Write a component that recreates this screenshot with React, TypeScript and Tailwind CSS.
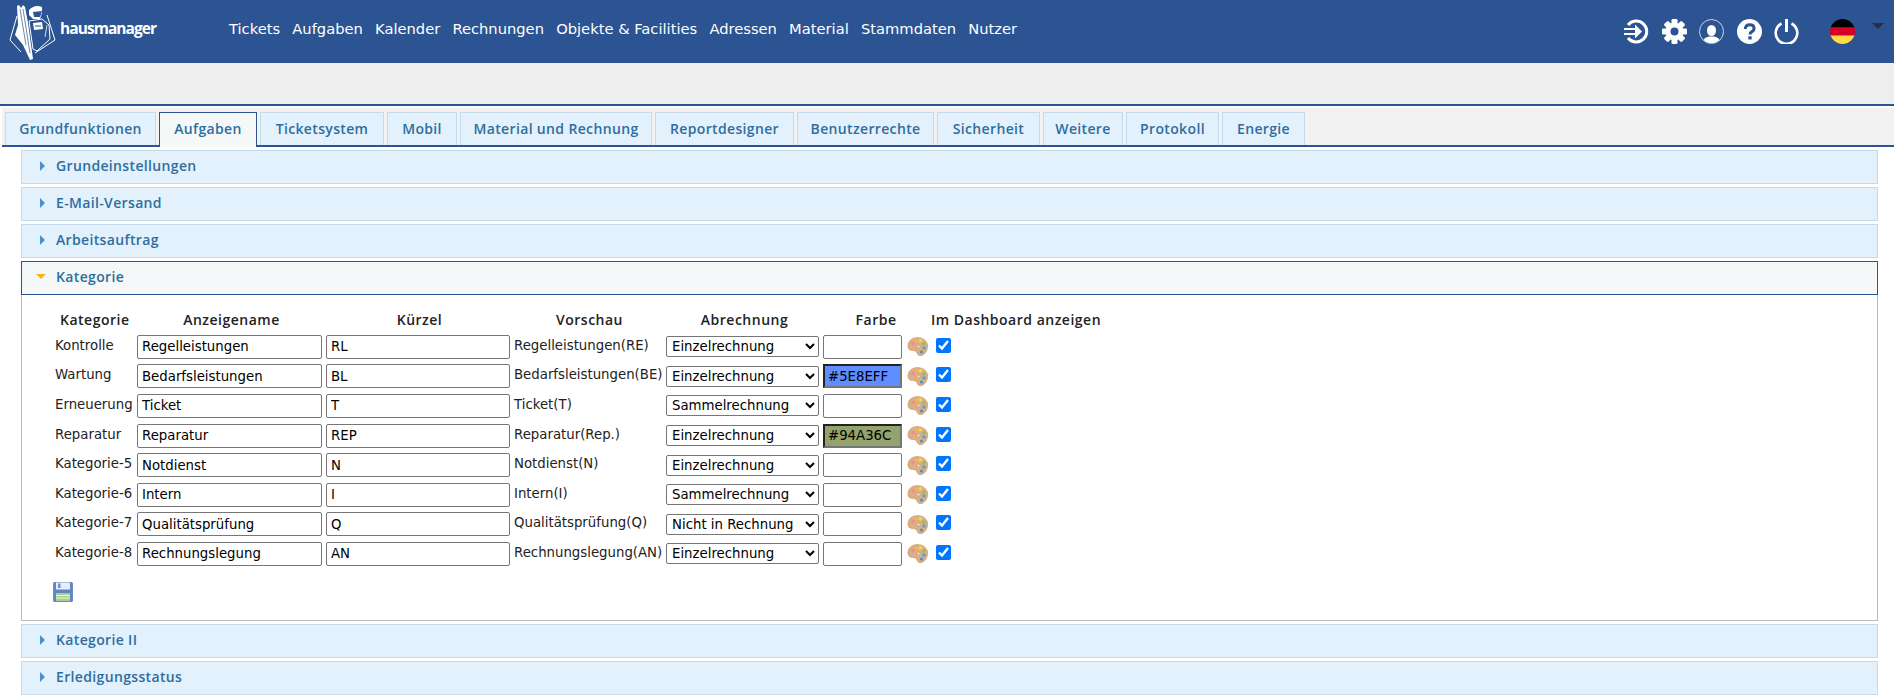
import React from "react";

const nav = ["Tickets", "Aufgaben", "Kalender", "Rechnungen", "Objekte & Facilities", "Adressen", "Material", "Stammdaten", "Nutzer"];
const tabs = [
  { t: "Grundfunktionen", w: "w-[151px]" },
  { t: "Aufgaben", w: "w-[98px]" },
  { t: "Ticketsystem", w: "w-[124px]" },
  { t: "Mobil", w: "w-[70px]" },
  { t: "Material und Rechnung", w: "w-[192px]" },
  { t: "Reportdesigner", w: "w-[139px]" },
  { t: "Benutzerrechte", w: "w-[137px]" },
  { t: "Sicherheit", w: "w-[103px]" },
  { t: "Weitere", w: "w-[80px]" },
  { t: "Protokoll", w: "w-[93px]" },
  { t: "Energie", w: "w-[83px]" },
];
const rows = [
  ["Kontrolle", "Regelleistungen", "RL", "Regelleistungen(RE)", "Einzelrechnung", ""],
  ["Wartung", "Bedarfsleistungen", "BL", "Bedarfsleistungen(BE)", "Einzelrechnung", "#5E8EFF"],
  ["Erneuerung", "Ticket", "T", "Ticket(T)", "Sammelrechnung", ""],
  ["Reparatur", "Reparatur", "REP", "Reparatur(Rep.)", "Einzelrechnung", "#94A36C"],
  ["Kategorie-5", "Notdienst", "N", "Notdienst(N)", "Einzelrechnung", ""],
  ["Kategorie-6", "Intern", "I", "Intern(I)", "Sammelrechnung", ""],
  ["Kategorie-7", "Qualitätsprüfung", "Q", "Qualitätsprüfung(Q)", "Nicht in Rechnung", ""],
  ["Kategorie-8", "Rechnungslegung", "AN", "Rechnungslegung(AN)", "Einzelrechnung", ""],
];

function Logo() {
  return (
    <svg width="48" height="62" viewBox="0 0 48 62" className="shrink-0" fill="none">
      <path d="M38 14 L46 39 L26 52 M12 51 L1 39 L8 15" stroke="#fff" strokeWidth="1" />
      <path d="M8 5 L10 4 L12 7 L14 4 L16 6 L19 22 L24 58 L21 59 L14 44 L6 34 L9 24 Z" fill="#fff" />
      <path d="M11 8 L17 44 M14 8 L21 52" stroke="#2c5392" strokeWidth="0.7" />
      <path d="M20 9 Q26 3 33 6 L33 12 L31 18 L24 18 L20 14 Z" fill="#fff" />
      <path d="M24 11 L33 10 L31 16 L25 16 Z" fill="#2c5392" />
      <path d="M20 20 L33 18 L40 24 L41 38 L28 50 L24 48 Z" fill="#2c5392" stroke="#fff" strokeWidth="1" />
      <path d="M24 22 L33 21 L34 28 L25 29 Z" fill="#fff" />
      <path d="M26 25 H32" stroke="#2c5392" strokeWidth="1" />
      <path d="M38 24 L36 36" stroke="#fff" strokeWidth="0.8" />
    </svg>
  );
}

function SignIn() {
  return (
    <svg width="25" height="25" viewBox="0 0 25 25" fill="none" stroke="#fff" strokeWidth="3">
      <path d="M4 6 A10.5 10.5 0 1 1 4 19" />
      <path d="M0 10 H11 M0 15 H11" strokeWidth="2.2" />
      <path d="M11 5.5 L18 12.5 L11 19.5 Z" fill="#fff" stroke="none" />
    </svg>
  );
}
function Gear() {
  const teeth = [0, 45, 90, 135];
  return (
    <svg width="25" height="25" viewBox="0 0 25 25">
      {teeth.map((a) => (
        <rect key={a} x="9.5" y="0" width="6" height="25" rx="1.3" fill="#fff" transform={`rotate(${a} 12.5 12.5)`} />
      ))}
      <circle cx="12.5" cy="12.5" r="9" fill="#fff" />
      <circle cx="12.5" cy="12.5" r="4" fill="#2c5392" />
    </svg>
  );
}
function User() {
  return (
    <svg width="25" height="25" viewBox="0 0 25 25">
      <defs>
        <clipPath id="userClip"><circle cx="12.5" cy="12.5" r="11.5" /></clipPath>
      </defs>
      <circle cx="12.5" cy="12.5" r="12" fill="none" stroke="#c9d4e4" strokeWidth="1" />
      <g clipPath="url(#userClip)" fill="#fff">
        <ellipse cx="12.5" cy="11.5" rx="4.5" ry="5.5" />
        <path d="M3 25 Q4 18.5 10 17.5 L15 17.5 Q21 18.5 22 25 Z" />
      </g>
    </svg>
  );
}
function Help() {
  return (
    <svg width="25" height="25" viewBox="0 0 25 25">
      <circle cx="12.5" cy="12.5" r="12.5" fill="#fff" />
      <path d="M8.3 10 Q8.5 5.8 12.7 5.8 Q17 5.8 17 9.4 Q17 11.6 14.6 12.8 Q13 13.6 13 15.4" fill="none" stroke="#2c5392" strokeWidth="3" />
      <rect x="11.3" y="17.3" width="3.4" height="3.2" fill="#2c5392" />
    </svg>
  );
}
function Power() {
  return (
    <svg width="25" height="25" viewBox="0 0 25 25" fill="none" stroke="#fff" strokeWidth="2.6">
      <path d="M7.5 4.5 A10.8 10.8 0 1 0 17.5 4.5" />
      <path d="M12.5 0 V13" strokeWidth="3" />
    </svg>
  );
}
function Flag() {
  return (
    <svg width="25" height="25" viewBox="0 0 25 25">
      <defs>
        <clipPath id="flagClip"><circle cx="12.5" cy="12.5" r="12.5" /></clipPath>
      </defs>
      <g clipPath="url(#flagClip)">
        <rect width="25" height="8.5" fill="#000" />
        <rect y="8.5" width="25" height="8" fill="#d80027" />
        <rect y="16.5" width="25" height="8.5" fill="#ffda44" />
      </g>
    </svg>
  );
}
function Palette() {
  return (
    <svg width="21" height="19" viewBox="0 0 21 19" className="block">
      <path d="M1 8 Q2 1 10 0.5 Q18 0.5 20.5 7 Q21.5 15 15 18.5 Q11 19.5 10 16 Q9.5 13.5 6 13.5 Q0.5 13.5 1 8 Z" fill="#dcae85" stroke="#c4935f" strokeWidth="0.6" />
      <circle cx="6" cy="6.5" r="1.8" fill="#f08f8a" />
      <circle cx="9.5" cy="3.7" r="1.8" fill="#f7b53e" />
      <circle cx="13.5" cy="3.8" r="1.8" fill="#f1d94e" />
      <circle cx="16.8" cy="7" r="1.8" fill="#8dbf63" />
      <circle cx="17" cy="11" r="1.8" fill="#4fa6d6" />
      <circle cx="14.5" cy="15" r="1.6" fill="#4d90c0" />
      <circle cx="11.5" cy="9.5" r="1.5" fill="#f3e2cf" stroke="#bb8a5c" strokeWidth="0.5" />
    </svg>
  );
}
function Floppy() {
  return (
    <svg width="20" height="20" viewBox="0 0 20 20" className="block">
      <rect x="0.3" y="0.3" width="19.4" height="19.4" rx="1.5" fill="#5f86c4" stroke="#4a6fa8" strokeWidth="0.6" />
      <rect x="3" y="0.5" width="14" height="7" fill="#e6edf8" />
      <rect x="5" y="1.5" width="2.5" height="4.5" fill="#6d92cb" />
      <rect x="3" y="11" width="14" height="8" fill="#a8cf8d" />
      <path d="M3 13.5 H17 M3 16 H17" stroke="#eef5e6" strokeWidth="1" />
    </svg>
  );
}

const boldFont = "font-['Open_Sans','DejaVu_Sans',sans-serif] font-semibold text-[14px] tracking-[0.35px]";

function Section({ title, open }: { title: string; open?: boolean }) {
  return (
    <div
      className={
        (open
          ? "flex h-[34px] items-center border border-[#2c5392] bg-[#f5f8f9] pb-[3px] pl-[14px] text-[#2e6e9e] "
          : "flex h-[34px] items-center border border-[#c5dbec] bg-[#e3f1fd] pb-[3px] pl-[18px] text-[#2e6e9e] ") + boldFont
      }
    >
      {open ? (
        <span className="mr-[10px] block h-0 w-0 border-x-[5px] border-t-[5px] border-x-transparent border-t-[#f9b21a]" />
      ) : (
        <span className="mr-[11px] block h-0 w-0 border-y-[5px] border-l-[5px] border-y-transparent border-l-[#4a90d0]" />
      )}
      {title}
    </div>
  );
}

const inputCls = "block h-[24px] rounded-[2px] border border-[#767676] bg-white px-[4px] text-[13.3px] text-black outline-none";
const thCls = "font-['Open_Sans','DejaVu_Sans',sans-serif] font-semibold text-[14px] tracking-[0.5px] text-[#222]";

export default function App() {
  return (
    <div className="h-[700px] overflow-hidden bg-white font-['DejaVu_Sans','Liberation_Sans',sans-serif] text-[13.3px] text-[#222]">
      <header className="flex h-[63px] items-center bg-[#2c5392] text-white">
        <div className="ml-[9px] flex w-[220px] items-center">
          <Logo />
          <span className="ml-[3px] mt-[-5px] font-['Open_Sans',sans-serif] text-[15.5px] font-bold tracking-[-0.95px]">hausmanager</span>
        </div>
        <nav className="mt-[-4px] flex gap-[12.2px] text-[14.7px]">
          {nav.map((n) => (
            <span key={n}>{n}</span>
          ))}
        </nav>
        <div className="ml-auto mr-[10px] flex items-center">
          <div className="flex gap-[12.5px]">
            <SignIn />
            <Gear />
            <User />
            <Help />
            <Power />
          </div>
          <div className="ml-[31px]">
            <Flag />
          </div>
          <span className="ml-[17px] mt-[-12px] block h-0 w-0 border-x-[6px] border-t-[6px] border-x-transparent border-t-[#2a2f3a]" />
        </div>
      </header>
      <div className="h-[43px] border-b-2 border-[#2c5392] bg-[#eeeeee]" />
      <div className="ml-[2px] mt-[2px] flex h-[39px] items-end gap-[3px] border-b-2 border-b-[#2c5392] bg-[#f2f2f2] pl-[3px]">
        {tabs.map(({ t, w }) => (
          <div
            key={t}
            className={
              (t === "Aufgaben"
                ? "mb-[-2px] flex h-[35px] items-center justify-center border border-b-0 border-[#2c5392] bg-[#f5f8f9] pb-[3px] text-[#2e6e9e] "
                : "flex h-[33px] items-center justify-center border border-b-0 border-[#c5dbec] bg-[#e3f1fd] pb-[1px] text-[#2e6e9e] ") +
              w +
              " " +
              boldFont
            }
          >
            {t}
          </div>
        ))}
      </div>
      <div className="ml-[21px] mr-[16px] mt-[3px] flex flex-col gap-[3px]">
        <Section title="Grundeinstellungen" />
        <Section title="E-Mail-Versand" />
        <Section title="Arbeitsauftrag" />
        <div>
          <Section title="Kategorie" open />
          <div className="h-[326px] border border-t-0 border-[#bbbbbb] pl-[31px] pt-[12px]">
            <table className="ml-[2px] border-separate border-spacing-0">
              <thead>
                <tr className="h-[25px]">
                  <th className={"w-[82px] pl-[5px] text-left " + thCls}>Kategorie</th>
                  <th className={"w-[189px] " + thCls}>Anzeigename</th>
                  <th className={"w-[187px] " + thCls}>Kürzel</th>
                  <th className={"w-[153px] " + thCls}>Vorschau</th>
                  <th className={"w-[157px] " + thCls}>Abrechnung</th>
                  <th className={"w-[84px] pl-[22px] " + thCls}>Farbe</th>
                  <th className={"pl-[24px] text-left " + thCls}>Im Dashboard anzeigen</th>
                </tr>
              </thead>
              <tbody>
                {rows.map(([kat, name, kurz, vorschau, abr, farbe]) => (
                  <tr key={kat} className="h-[29.6px]">
                    <td className="pb-[2px]">{kat}</td>
                    <td>
                      <input readOnly value={name} className={inputCls + " w-[185px]"} />
                    </td>
                    <td>
                      <input readOnly value={kurz} className={inputCls + " w-[184px]"} />
                    </td>
                    <td className="pb-[2px] pl-[1px]">{vorschau}</td>
                    <td>
                      <select
                        defaultValue={abr}
                        className="block h-[21px] w-[153px] rounded-[2px] border border-[#767676] bg-white pl-[1px] text-[13.3px] text-black"
                      >
                        <option>Einzelrechnung</option>
                        <option>Sammelrechnung</option>
                        <option>Nicht in Rechnung</option>
                      </select>
                    </td>
                    <td>
                      {farbe ? (
                        <input
                          readOnly
                          value={farbe}
                          style={{ backgroundColor: farbe }}
                          className="block h-[24px] w-[79px] border-2 border-b-[#767676] border-l-[#222] border-r-[#767676] border-t-[#222] px-[3px] text-[13.3px] text-black outline-none"
                        />
                      ) : (
                        <input readOnly value="" className={inputCls + " w-[79px]"} />
                      )}
                    </td>
                    <td>
                      <div className="flex items-center gap-[8px]">
                        <Palette />
                        <input type="checkbox" readOnly checked className="m-0 mt-[-3px] block h-[15px] w-[15px]" />
                      </div>
                    </td>
                  </tr>
                ))}
              </tbody>
            </table>
            <div className="mt-[13px]">
              <Floppy />
            </div>
          </div>
        </div>
        <Section title="Kategorie II" />
        <Section title="Erledigungsstatus" />
      </div>
    </div>
  );
}
